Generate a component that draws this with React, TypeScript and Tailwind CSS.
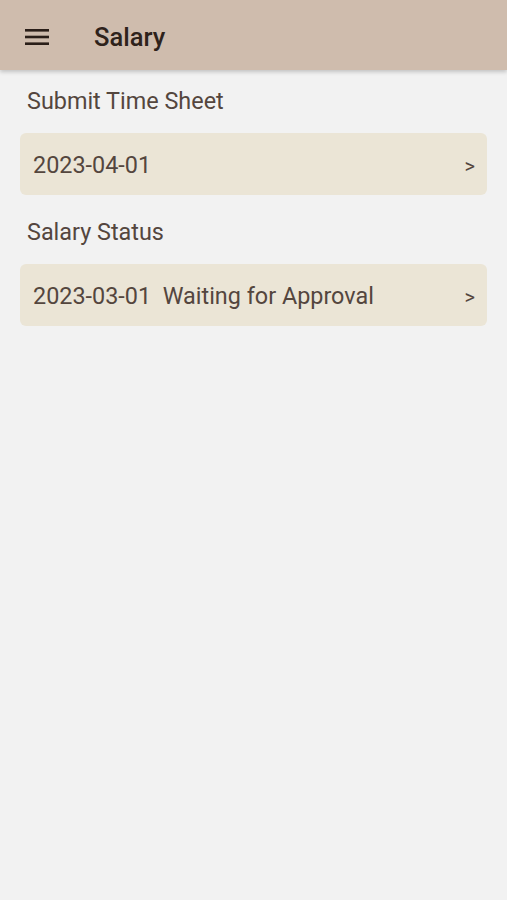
const rows = [
  { label: "Submit Time Sheet", text: "2023-04-01" },
  { label: "Salary Status", text: "2023-03-01\u00a0\u00a0Waiting for Approval" },
];

function Hamburger() {
  return (
    <svg width="24" height="16" viewBox="0 0 24 16" className="ml-[25px] text-[#2a1e18]" fill="currentColor">
      <rect x="0" y="0" width="24" height="2.6" />
      <rect x="0" y="6.7" width="24" height="2.6" />
      <rect x="0" y="13.4" width="24" height="2.6" />
    </svg>
  );
}

export default function App() {
  return (
    <div className="min-h-[900px] bg-[#f2f2f2] font-['Roboto',sans-serif]">
      <header className="flex h-[70px] items-center bg-[#cfbcad] pt-[4px] shadow-[0_2px_4px_rgba(0,0,0,0.2)]">
        <Hamburger />
        <h1 className="ml-[45px] text-[25.5px] font-medium text-[#2e221b]">Salary</h1>
      </header>
      <main className="px-5 pt-[15px]">
        {rows.map((row) => (
          <section key={row.label} className="mb-[21px]">
            <p className="px-[7px] text-[23.4px] leading-[32px] text-[#54463e]">{row.label}</p>
            <div className="mt-[16px] flex h-[62px] items-center justify-between rounded-[6px] bg-[#ebe5d6] pl-[13px] pr-[12px] pt-[4px] text-[#54463e]">
              <span className="text-[23.4px]">{row.text}</span>
              <span className="text-[20px]">&gt;</span>
            </div>
          </section>
        ))}
      </main>
    </div>
  );
}
